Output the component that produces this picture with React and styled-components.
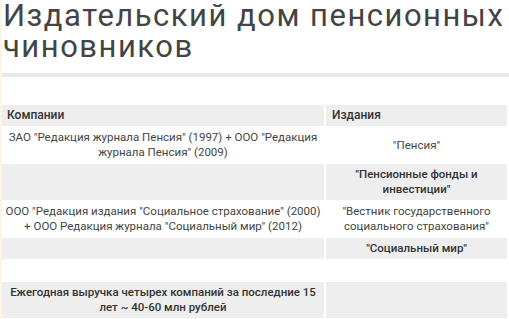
import styled, { createGlobalStyle } from "styled-components";

const GlobalStyle = createGlobalStyle`
  html, body {
    margin: 0;
    padding: 0;
    background: #fff;
  }
  body {
    font-family: Roboto, "Liberation Sans", sans-serif;
    color: #444;
  }
`;

const rows = [
  {
    company: 'ЗАО "Редакция журнала Пенсия" (1997) + ООО "Редакция журнала Пенсия" (2009)',
    edition: '"Пенсия"',
  },
  { company: "", edition: '"Пенсионные фонды и инвестиции"', strong: true, tone: "gray" },
  {
    company: 'ООО "Редакция издания "Социальное страхование" (2000) + ООО Редакция журнала "Социальный мир" (2012)',
    edition: '"Вестник государственного социального страхования"',
  },
  { company: "", edition: '"Социальный мир"', strong: true, tone: "gray" },
  { company: "\u00a0", edition: "" },
  {
    company: "Ежегодная выручка четырех компаний за последние 15 лет ~ 40-60 млн рублей",
    edition: "",
    companyStrong: true,
    tone: "gray",
  },
];

const App = () => {
  return (
    <Page>
      <GlobalStyle />
      <Title>Издательский дом пенсионных чиновников</Title>
      <Divider />
      <Table>
        <thead>
          <tr>
            <HeadCell>Компании</HeadCell>
            <HeadCell>Издания</HeadCell>
          </tr>
        </thead>
        <tbody>
          {rows.map((row, i) => (
            <tr key={i}>
              <Cell $tone={row.tone} $strong={row.companyStrong}>
                {row.company}
              </Cell>
              <Cell $tone={row.tone} $strong={row.strong}>
                {row.edition}
              </Cell>
            </tr>
          ))}
        </tbody>
      </Table>
    </Page>
  );
};

const Page = styled.div`
  width: 507px;
  min-height: 319px;
  border-left: 2px solid #fbf6e3;
  overflow: hidden;
`;

const Title = styled.h1`
  margin: 0;
  padding: 0 0 0 1px;
  font-size: 31px;
  line-height: 31px;
  letter-spacing: 1.5px;
  font-weight: 400;
  color: #444;
`;

const Divider = styled.div`
  height: 4px;
  margin-top: 11px;
  background: #e8e8e8;
`;

const Table = styled.table`
  margin-top: 27px;
  width: 509px;
  border-collapse: separate;
  border-spacing: 2px 1px;
  margin-left: -2px;
  font-size: 12px;
  line-height: 15px;
  table-layout: fixed;
`;

const HeadCell = styled.th`
  background: #eee;
  color: #333;
  font-weight: 500;
  text-align: left;
  padding: 3px 6px;
  &:first-child {
    width: 311px;
    padding-left: 5px;
  }
`;

const Cell = styled.td`
  background: ${(p) => (p.$tone === "gray" ? "#eee" : "#fff")};
  color: ${(p) => (p.$strong ? "#333" : "#444")};
  font-size: 11.5px;
  font-weight: ${(p) => (p.$strong ? 500 : 400)};
  text-align: center;
  padding: 3px 2px;
`;

export default App;
